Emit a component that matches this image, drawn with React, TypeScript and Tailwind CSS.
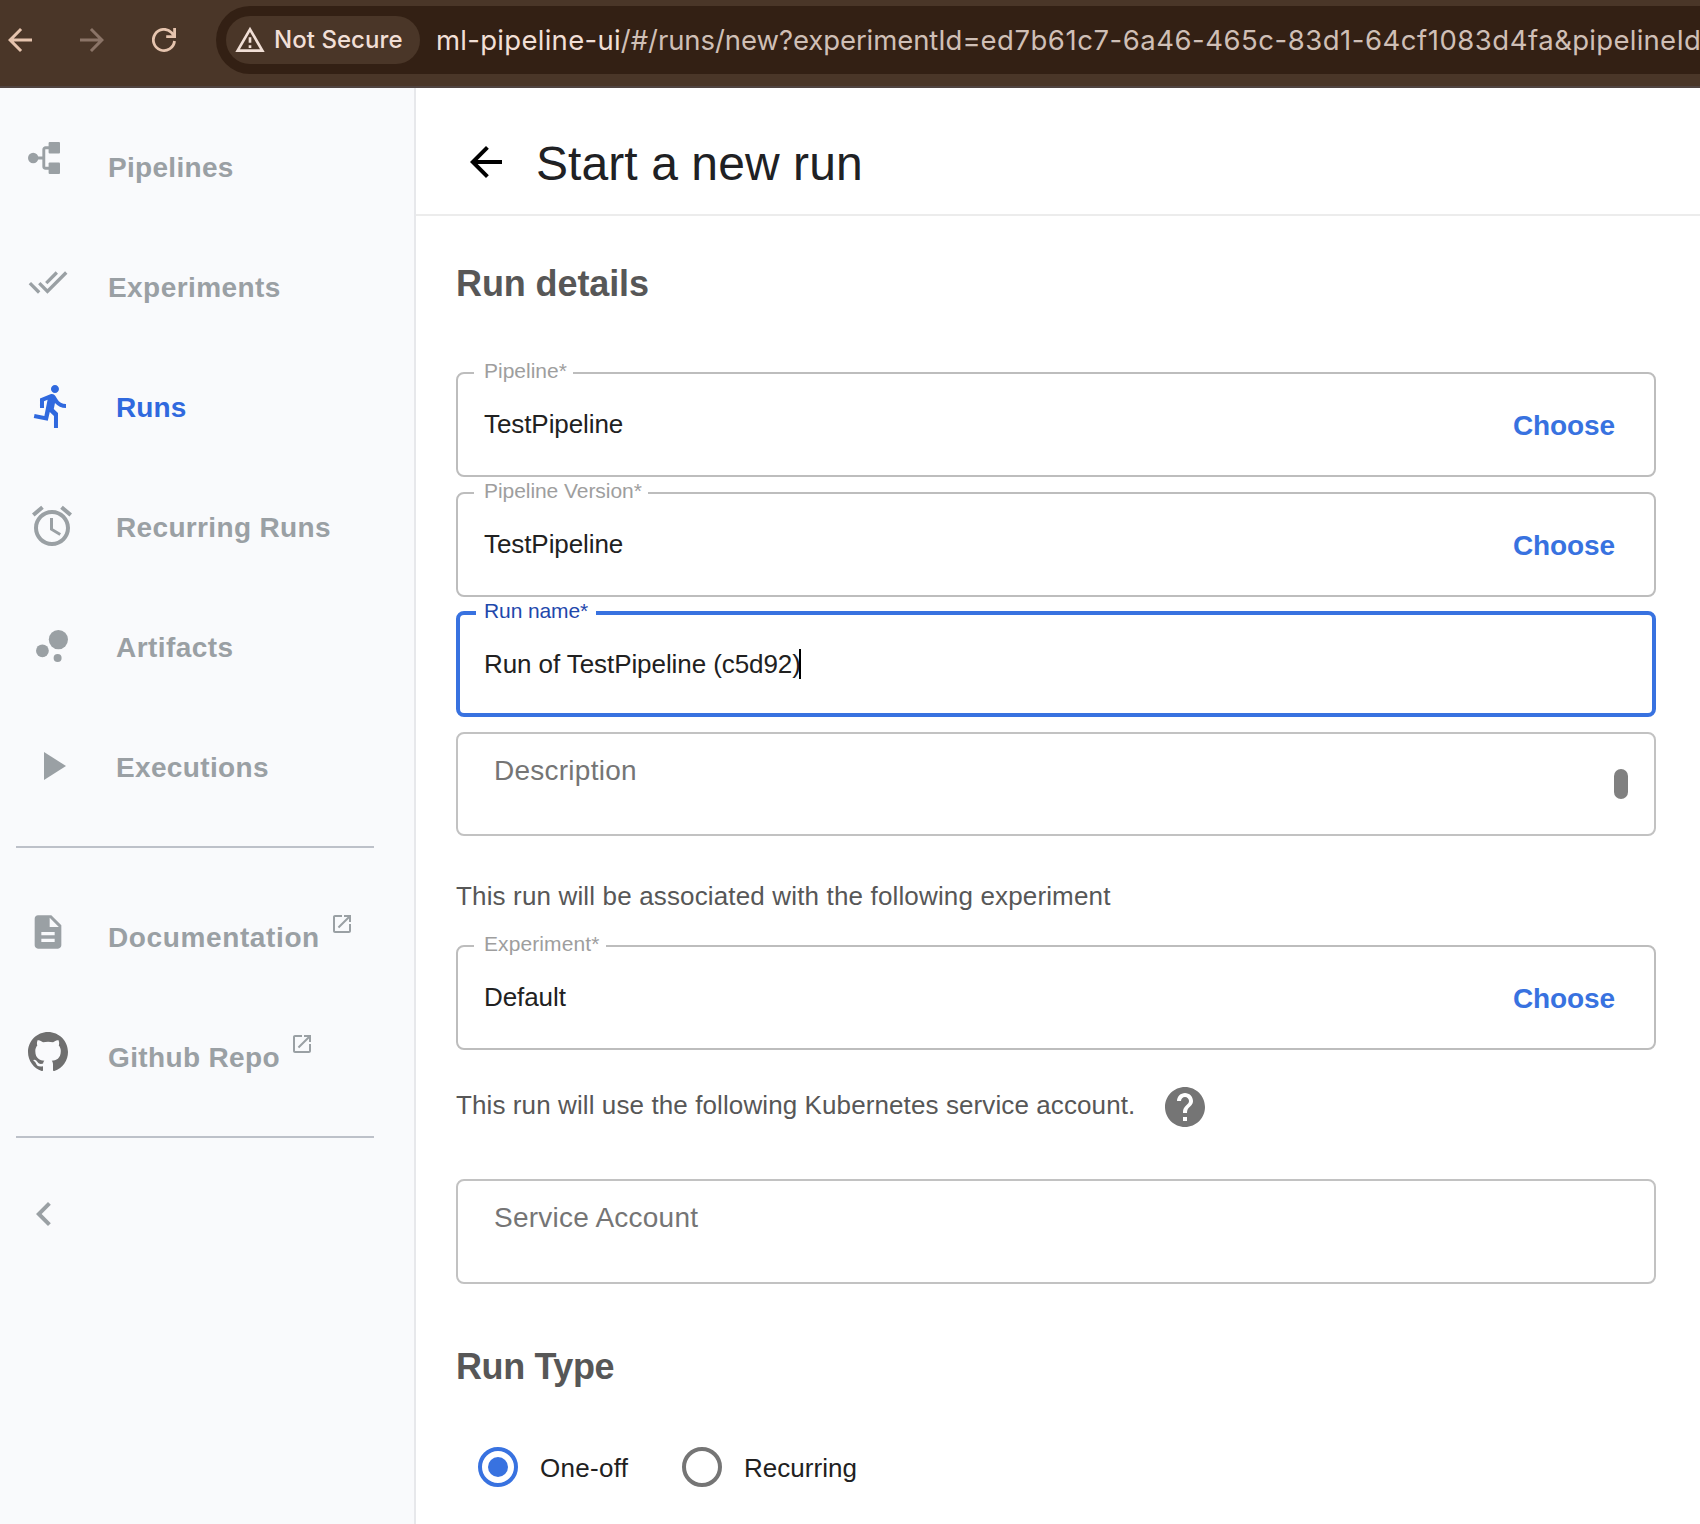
import React from "react";

type IconProps = { d: string; className?: string };

function Icon({ d, className = "" }: IconProps) {
  return (
    <svg viewBox="0 0 24 24" fill="currentColor" className={`shrink-0 ${className}`} aria-hidden="true">
      <path d={d} />
    </svg>
  );
}

const paths = {
  back: "M20 11H7.83l5.59-5.59L12 4l-8 8 8 8 1.41-1.41L7.83 13H20v-2z",
  forward: "M12 4l-1.41 1.41L16.17 11H4v2h12.17l-5.58 5.59L12 20l8-8z",
  warning: "M12 5.99L19.53 19H4.47L12 5.99M12 2L1 21h22L12 2zm1 14h-2v2h2v-2zm0-6h-2v4h2v-4z",
  doneAll:
    "M18 7l-1.41-1.41-6.34 6.34 1.41 1.41L18 7zm4.24-1.41L11.66 16.17 7.48 12l-1.41 1.41L11.66 19l12-12-1.42-1.41zM.41 13.41L6 19l1.41-1.41L1.83 12 .41 13.41z",
  run: "M13.49 5.48c1.1 0 2-.9 2-2s-.9-2-2-2-2 .9-2 2 .9 2 2 2zm-3.6 13.9l1-4.4 2.1 2v6h2v-7.5l-2.1-2 .6-3c1.3 1.5 3.3 2.5 5.5 2.5v-2c-1.9 0-3.5-1-4.3-2.4l-1-1.6c-.4-.6-1-1-1.7-1-.3 0-.5.1-.8.1l-5.2 2.2v4.7h2v-3.4l1.8-.7-1.6 8.1-4.9-1-.4 2 7 1.4z",
  alarm:
    "M22 5.72l-4.6-3.86-1.29 1.53 4.6 3.86L22 5.72zM7.88 3.39L6.6 1.86 2 5.71l1.29 1.53 4.59-3.85zM12.5 8H11v6l4.75 2.85.75-1.23-4-2.37V8zM12 4c-4.97 0-9 4.03-9 9s4.02 9 9 9c4.97 0 9-4.03 9-9s-4.03-9-9-9zm0 16c-3.87 0-7-3.13-7-7s3.13-7 7-7 7 3.13 7 7-3.13 7-7 7z",
  play: "M8 5v14l11-7z",
  doc: "M14 2H6c-1.1 0-1.99.9-1.99 2L4 20c0 1.1.89 2 1.99 2H18c1.1 0 2-.9 2-2V8l-6-6zm2 16H8v-2h8v2zm0-4H8v-2h8v2zm-3-5V3.5L18.5 9H13z",
  open: "M19 19H5V5h7V3H5c-1.11 0-2 .9-2 2v14c0 1.1.89 2 2 2h14c1.1 0 2-.9 2-2v-7h-2v7zM14 3v2h3.59l-9.83 9.83 1.41 1.41L19 6.41V10h2V3h-7z",
  chevron: "M15.41 7.41L14 6l-6 6 6 6 1.41-1.41L10.83 12z",
  help: "M12 2C6.48 2 2 6.48 2 12s4.48 10 10 10 10-4.48 10-10S17.52 2 12 2zm1 17h-2v-2h2v2zm2.07-7.75l-.9.92C13.45 12.9 13 13.5 13 15h-2v-.5c0-1.1.45-2.1 1.17-2.83l1.24-1.26c.37-.36.59-.86.59-1.41 0-1.1-.9-2-2-2s-2 .9-2 2H8c0-2.21 1.79-4 4-4s4 1.79 4 4c0 .88-.36 1.68-.93 2.25z",
};

function PipelinesIcon({ className = "" }: { className?: string }) {
  return (
    <svg viewBox="0 0 32 32" className={`shrink-0 ${className}`} fill="currentColor" aria-hidden="true">
      <circle cx="5.2" cy="16" r="5.2" />
      <path d="M5 16h11M22 5.7h-4.5a1.7 1.7 0 0 0-1.7 1.7v17.2a1.7 1.7 0 0 0 1.7 1.7H22" fill="none" stroke="currentColor" strokeWidth="2.9" />
      <rect x="20.6" y="0" width="11.4" height="11.4" rx="1" />
      <rect x="20.6" y="20.6" width="11.4" height="11.4" rx="1" />
    </svg>
  );
}

function GithubIcon({ className = "" }: { className?: string }) {
  return (
    <svg viewBox="0 0 16 16" className={`shrink-0 ${className}`} fill="currentColor" aria-hidden="true">
      <path d="M8 0C3.58 0 0 3.58 0 8c0 3.54 2.29 6.53 5.47 7.59.4.07.55-.17.55-.38 0-.19-.01-.82-.01-1.49-2.01.37-2.53-.49-2.69-.94-.09-.23-.48-.94-.82-1.13-.28-.15-.68-.52-.01-.53.63-.01 1.08.58 1.23.82.72 1.21 1.87.87 2.33.66.07-.52.28-.87.51-1.07-1.78-.2-3.64-.89-3.64-3.95 0-.87.31-1.59.82-2.15-.08-.2-.36-1.02.08-2.12 0 0 .67-.21 2.2.82.64-.18 1.32-.27 2-.27s1.36.09 2 .27c1.53-1.04 2.2-.82 2.2-.82.44 1.1.16 1.92.08 2.12.51.56.82 1.27.82 2.15 0 3.07-1.87 3.75-3.65 3.95.29.25.54.73.54 1.48 0 1.07-.01 1.93-.01 2.2 0 .21.15.46.55.38A8.01 8.01 0 0 0 16 8c0-4.42-3.58-8-8-8z" />
    </svg>
  );
}

function BubbleIcon({ className = "" }: { className?: string }) {
  return (
    <svg viewBox="0 0 24 24" className={`shrink-0 ${className}`} fill="currentColor" aria-hidden="true">
      <circle cx="7.2" cy="14.4" r="3.2" />
      <circle cx="14.8" cy="18" r="2" />
      <circle cx="15.2" cy="8.8" r="4.8" />
    </svg>
  );
}

function ReloadIcon({ className = "" }: { className?: string }) {
  return (
    <svg viewBox="0 0 24 24" className={`shrink-0 ${className}`} fill="none" stroke="currentColor" strokeWidth="2.8" aria-hidden="true">
      <path d="M22.5 13A10.6 10.6 0 1 1 19.6 4.6L22.4 8" />
      <path d="M22.6 0V8.6H14.2" />
    </svg>
  );
}

function BrowserBar() {
  return (
    <header className="flex h-[88px] shrink-0 items-start overflow-hidden border-b-2 border-[#504441] bg-[#4a3628] font-['Inter',sans-serif]">
      <Icon d={paths.back} className="mt-[22px] ml-[2px] size-9 text-[#e6c4ae]" />
      <Icon d={paths.forward} className="mt-[22px] ml-9 size-9 text-[#8b7467]" />
      <ReloadIcon className="mt-7 ml-[42px] size-6 text-[#e6c4ae]" />
      <div className="mt-[6px] ml-10 flex h-[68px] w-[1600px] shrink-0 items-center rounded-l-full bg-[#332014] pl-[10px]">
        <div className="flex h-12 w-[194px] shrink-0 items-center rounded-full bg-[#4a3628] pl-2 text-[#f1dfd6]">
          <Icon d={paths.warning} className="size-8" />
          <span className="ml-2 text-[24px] leading-8 font-medium tracking-[0.05px] whitespace-nowrap">Not Secure</span>
        </div>
        <p className="ml-4 text-[27.5px] leading-10 tracking-[0.28px] whitespace-nowrap text-[#cfbfb6]">
          <span className="text-[#f1dfd6]">ml-pipeline-ui</span>
          <span className="tracking-[-0.07px]">/#/runs/new?experimentId=</span>
          <span className="tracking-[0.52px]">ed7b61c7-6a46-465c-83d1-64cf1083d4fa</span>
          &amp;pipelineId
        </p>
      </div>
    </header>
  );
}

type NavItemProps = {
  icon: React.ReactNode;
  label: string;
  labelClass: string;
  active?: boolean;
  external?: boolean;
};

function NavItem({ icon, label, labelClass, active, external }: NavItemProps) {
  return (
    <a className={`flex h-[120px] items-start pl-7 ${active ? "text-[#3069de]" : "text-[#9aa0a4]"}`}>
      {icon}
      <span className={`mt-[41px] text-[28px] leading-10 font-bold whitespace-nowrap ${labelClass}`}>{label}</span>
      {external && <Icon d={paths.open} className="mt-[35px] ml-[10px] size-6" />}
    </a>
  );
}

function Sidebar() {
  return (
    <nav className="w-[416px] shrink-0 border-r-2 border-[#e7e8eb] bg-[#f9fafc] pt-[19px]">
      <NavItem icon={<PipelinesIcon className="mt-[35px] size-8" />} label="Pipelines" labelClass="ml-12 tracking-[0.3px]" />
      <NavItem icon={<Icon d={paths.doneAll} className="mt-[35px] size-10" />} label="Experiments" labelClass="ml-10 tracking-[0.43px]" />
      <NavItem active icon={<Icon d={paths.run} className="mt-[35px] size-12" />} label="Runs" labelClass="ml-10 tracking-[0.1px]" />
      <NavItem icon={<Icon d={paths.alarm} className="mt-[35px] size-12" />} label="Recurring Runs" labelClass="ml-10 tracking-[0.35px]" />
      <NavItem icon={<BubbleIcon className="mt-[35px] size-12" />} label="Artifacts" labelClass="ml-10 tracking-[0.45px]" />
      <NavItem icon={<Icon d={paths.play} className="mt-[35px] size-12" />} label="Executions" labelClass="ml-10 tracking-[0.35px]" />
      <hr className="mt-[19px] mr-10 mb-[29px] ml-4 border-t-2 border-[#bdc1c9]" />
      <NavItem external icon={<Icon d={paths.doc} className="mt-[35px] size-10" />} label="Documentation" labelClass="ml-10 tracking-[0.62px]" />
      <NavItem external icon={<GithubIcon className="mt-[35px] size-10 text-[#6f6f6f]" />} label="Github Repo" labelClass="ml-10 tracking-[0.36px]" />
      <hr className="mt-[19px] mr-10 ml-4 border-t-2 border-[#bdc1c9]" />
      <button className="mt-[52px] ml-5 block text-[#9aa0a4]" aria-label="Collapse">
        <Icon d={paths.chevron} className="size-12" />
      </button>
    </nav>
  );
}

type FieldProps = {
  label: string;
  labelClass: string;
  value: string;
};

function ChooseField({ label, labelClass, value }: FieldProps) {
  return (
    <div className="relative flex h-[105px] items-start justify-between rounded-lg border-2 border-[#bdbdbd] pr-[39px] pl-[26px]">
      <span className={`absolute -top-[15px] left-4 bg-white pl-[10px] text-[21px] leading-6 whitespace-nowrap text-[#9e9e9e] ${labelClass}`}>
        {label}
      </span>
      <span className="mt-[34px] text-[26px] leading-8 tracking-[-0.08px] text-[#212121]">{value}</span>
      <button className="mt-9 text-[28px] leading-8 font-bold tracking-[-0.1px] text-[#3872e0]">Choose</button>
    </div>
  );
}

function Radio({ label, checked, className }: { label: string; checked?: boolean; className: string }) {
  return (
    <label className="flex items-center">
      <span className={`flex size-10 items-center justify-center rounded-full border-4 ${checked ? "border-[#3872e0]" : "border-[#757575]"}`}>
        {checked && <span className="size-5 rounded-full bg-[#3872e0]" />}
      </span>
      <span className={`mt-[2px] ml-[22px] text-[26px] leading-8 text-[#212121] ${className}`}>{label}</span>
    </label>
  );
}

function Main() {
  return (
    <main className="flex-1 bg-white">
      <div className="flex h-32 items-start border-b-2 border-[#ececec] pl-[46px]">
        <Icon d={paths.back} className="mt-[50px] size-12 text-black" />
        <h1 className="mt-[46px] ml-[26px] text-[48px] leading-[60px] tracking-[0.08px] text-[#202124]">Start a new run</h1>
      </div>
      <div className="pr-11 pl-10">
        <h2 className="mt-12 text-[36px] leading-10 font-bold tracking-[-0.1px] text-[#575757]">Run details</h2>
        <div className="mt-[68px] flex flex-col gap-[15px]">
          <ChooseField label="Pipeline*" labelClass="w-[99px]" value="TestPipeline" />
          <ChooseField label="Pipeline Version*" labelClass="w-[174px] tracking-[-0.06px]" value="TestPipeline" />
          <div className="relative -mt-px flex h-[106px] items-start rounded-lg border-4 border-[#3872e0] pl-6">
            <span className="absolute -top-4 left-4 w-[120px] bg-white pl-2 text-[21px] leading-6 tracking-[-0.1px] whitespace-nowrap text-[#1f48ac]">
              Run name*
            </span>
            <span className="mt-[33px] text-[26px] leading-8 tracking-[-0.08px] text-[#212121]">Run of TestPipeline (c5d92)</span>
            <span className="mt-[34px] -ml-[2px] h-[30px] w-[2px] bg-black" />
          </div>
          <div className="flex h-[104px] items-start justify-between rounded-lg border-2 border-[#c2c2c2] pr-[26px] pl-9">
            <span className="mt-[21px] text-[28px] leading-8 tracking-[0.25px] text-[#757575]">Description</span>
            <span className="mt-[35px] h-[30px] w-[14px] rounded-full bg-[#808080]" />
          </div>
        </div>
        <p className="mt-11 text-[26px] leading-8 tracking-[0.15px] text-[#575757]">
          This run will be associated with the following experiment
        </p>
        <div className="mt-[33px]">
          <ChooseField label="Experiment*" labelClass="w-[132px] tracking-[0.1px]" value="Default" />
        </div>
        <div className="mt-[33px] flex items-start">
          <p className="mt-[6px] text-[26px] leading-8 tracking-[0.1px] text-[#575757]">
            This run will use the following Kubernetes service account.
          </p>
          <Icon d={paths.help} className="ml-[26px] size-12 text-[#757575]" />
        </div>
        <div className="mt-12 flex h-[105px] items-start rounded-lg border-2 border-[#c2c2c2] pl-9">
          <span className="mt-[21px] text-[28px] leading-8 tracking-[0.23px] text-[#757575]">Service Account</span>
        </div>
        <h2 className="mt-[63px] text-[36px] leading-10 font-bold tracking-[-0.4px] text-[#575757]">Run Type</h2>
        <div className="mt-[60px] flex pl-[22px]">
          <Radio checked label="One-off" className="w-[142px] tracking-[0.3px]" />
          <Radio label="Recurring" className="tracking-[0.03px]" />
        </div>
      </div>
    </main>
  );
}

export default function App() {
  return (
    <div className="flex h-[1524px] w-[1700px] flex-col overflow-hidden bg-white font-['Liberation_Sans',Arial,sans-serif]">
      <BrowserBar />
      <div className="flex flex-1 overflow-hidden">
        <Sidebar />
        <Main />
      </div>
    </div>
  );
}
